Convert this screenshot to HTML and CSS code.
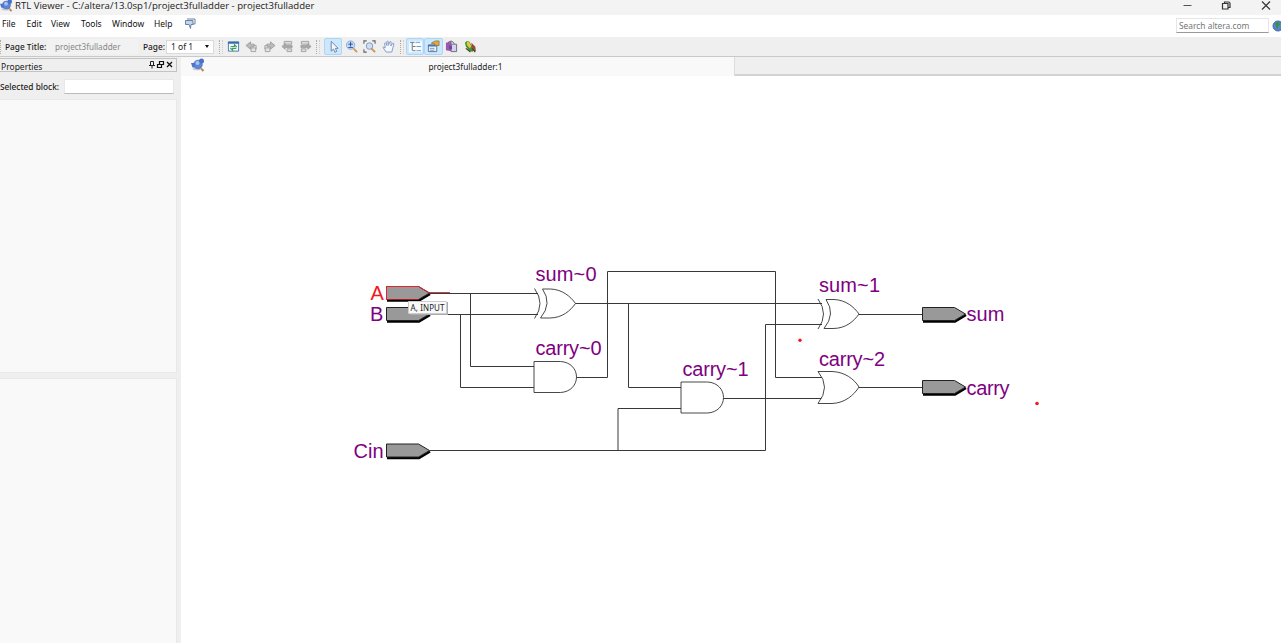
FILE: index.html
```html
<!DOCTYPE html>
<html lang="en">
<head>
<meta charset="utf-8">
<title>RTL Viewer</title>
<link rel="stylesheet" href="styles.css">
</head>
<body>
<svg class="defs" width="0" height="0">
  <symbol id="logo" viewBox="0 0 14 14">
    <path d="M9 9.500l3.500 3.500" stroke="#b9854a" stroke-width="2"/>
    <ellipse cx="6" cy="11" rx="4.500" ry="1.300" fill="#c9ccd4"/>
    <circle cx="7" cy="6.500" r="4.300" fill="#5f86d8" stroke="#4a6cba" stroke-width=".7"/>
    <circle cx="10.500" cy="3" r="2.500" fill="#4772c6"/>
    <path d="M0 5h4v4.500H1.500z" fill="#4f76c6"/>
    <circle cx="6.500" cy="5" r="2" fill="#a9c4f3"/>
  </symbol>
  <symbol id="pagearrow" viewBox="0 0 14 14">
    <path d="M1 6l5-4v2.500h4v3H6V10z" fill="#bababa" stroke="#959595" stroke-width=".8"/>
    <path d="M6.500 8.500h5v4h-5zM9 6h3v4" fill="#e4e4e4" stroke="#a2a2a2"/>
  </symbol>
  <symbol id="hier" viewBox="0 0 14 14">
    <path d="M3.500 1.500h8v3h-8zM6.500 9.500h5v3h-5z" fill="#ddd" stroke="#a0a0a0"/>
    <path d="M1 7l3.500-3v2H12v2H4.500v2z" fill="#aaa" stroke="#888" stroke-width=".6"/>
  </symbol>
</svg>
<div class="window">
  <header class="titlebar">
    <svg class="app-logo"><use href="#logo"/></svg>
    <span class="title">RTL Viewer - C:/altera/13.0sp1/project3fulladder - project3fulladder</span>
    <svg class="controls" viewBox="0 0 100 15">
      <path d="M3.500 5.500h8" stroke="#555"/>
      <path d="M42.500 3.500h5.500v5.500h-5.500zM44.500 3.500v-1.500h4q1.500 0 1.500 1.500v4h-2" fill="none" stroke="#333" stroke-width="1.200"/>
      <path d="M82 1.500l8 8m0-8l-8 8" stroke="#333" stroke-width="1.100"/>
    </svg>
  </header>
  <nav class="menubar">
    <span class="m-file">File</span><span class="m-edit">Edit</span><span class="m-view">View</span><span class="m-tools">Tools</span><span class="m-window">Window</span><span class="m-help">Help</span>
    <svg class="feedback" viewBox="0 0 12 12"><path d="M1.500 2.500h7.500v4h-2L6.500 10.500 5 6.500H1.500z" fill="#c4d6ea" stroke="#6782a5"/><path d="M3 1h8v5H9" fill="none" stroke="#6782a5"/></svg>
    <div class="search"><span>Search altera.com</span></div>
    <svg class="globe" viewBox="0 0 12 12"><circle cx="6" cy="6" r="5" fill="#5b84cf" stroke="#4368ab"/><path d="M3 3l4-1 1 3-2 1v4L4 7zM9 5l2 1-1 3z" fill="#36914b"/></svg>
  </nav>
  <div class="toolbar">
    <i class="grip g-first"></i>
    <span class="label page-title">Page Title:</span><span class="page-name">project3fulladder</span>
    <span class="label page-label">Page:</span><span class="page-select">1 of 1<i class="caret"></i></span>
    <i class="grip g-nav"></i>
    <div class="group nav-group">
      <svg viewBox="0 0 14 14"><path d="M1.500 2h11v10h-11z" fill="#f3f8fc" stroke="#4777ad"/><path d="M1 2h12v2H1z" fill="#326bb1"/><path d="M4 7h4V5l2.500 2.500M10 9H6v2L3.500 8.500" stroke="#43a05a" stroke-width="1.300" fill="none"/></svg>
      <svg viewBox="0 0 14 14"><use href="#pagearrow"/></svg>
      <svg viewBox="0 0 14 14"><use href="#pagearrow" transform="translate(14 0) scale(-1 1)"/></svg>
      <svg viewBox="0 0 14 14"><use href="#hier"/></svg>
      <svg viewBox="0 0 14 14"><use href="#hier" transform="translate(14 0) scale(-1 1)"/></svg>
    </div>
    <i class="grip g-tools"></i>
    <div class="group">
      <span class="tool on"><svg viewBox="0 0 14 14"><path d="M4.500 1.500v10.500L7 9.800l1.500 3.400 2-.9L9 9h3z" fill="#f4f7fc" stroke="#6a7f9e" stroke-width="1"/></svg></span>
      <span class="tool"><svg viewBox="0 0 14 14"><path d="M9 9l4 4" stroke="#d39b4c" stroke-width="2"/><circle cx="6" cy="5.500" r="4.500" fill="#c8dcfa" stroke="#8aa9d7"/><path d="M3.500 4.500h5M6 2v5M3.500 8h5" stroke="#244e99"/></svg></span>
      <span class="tool"><svg viewBox="0 0 14 14"><path d="M1 4V1h3M10 1h3v3M1 10v3h3" fill="none" stroke="#5f6368" stroke-width="1.200"/><path d="M9 9l4 4" stroke="#ce944a" stroke-width="2"/><circle cx="7" cy="6.500" r="3.500" fill="#cfdef3" stroke="#8097b8"/></svg></span>
      <span class="tool"><svg viewBox="0 0 14 14"><path d="M4.500 13L1 8q.8-1.200 2.500.5L2.700 3.500q1-1 1.600 0L5.200 6V1.700q1-1 1.600 0v4L8.500 1.800q1-.6 1.400.4L9.500 6.500l2-3q1.300-.4 1.300.8L10.500 13z" fill="#f4f8ff" stroke="#7f97cb" stroke-width="1"/></svg></span>
    </div>
    <i class="grip g-view"></i>
    <div class="group">
      <span class="tool on"><svg viewBox="0 0 14 14"><path d="M0 1h14v12H0z" fill="#f8fbfd"/><path d="M1 2.500h5M4 7h3M4 11.500h3M3.500 2.500v9" stroke="#5f7482"/><path d="M7 2.500h5M8 7h5M8 11.500h5" stroke="#6c92c4"/></svg></span>
      <span class="tool on"><svg viewBox="0 0 14 14"><path d="M1.500 5.500h9v7h-9z" fill="#f2f5fa" stroke="#55759d"/><path d="M1 5h9v2H1z" fill="#4374b6"/><path d="M3 9h5M3 11h5" stroke="#7795bc"/><path d="M5 3l4-2h4v5H9L8 4H5z" fill="#e0aa3a" stroke="#86652b" stroke-width=".7"/></svg></span>
      <span class="tool"><svg viewBox="0 0 14 14"><path d="M1 3l6-1v10l-6-1z" fill="#9a58b4"/><path d="M6.500 4.500h6v8h-6z" fill="#cfd4e8" stroke="#6e6490"/><path d="M3 3q4-4 7 1" fill="none" stroke="#555"/><path d="M4.500 6h3v4h-3z" fill="#784294"/></svg></span>
      <span class="tool"><svg viewBox="0 0 14 14"><path d="M1 3q2-3 5-1l2 4 5 6-3-.5-1 1.500-4-2-3-4z" fill="#3f9436"/><path d="M3 2q2-1 3 1l2 4-2 2-3-4z" fill="#e3c840"/><path d="M8 3l4 4 1 5-5-5z" fill="#a74036"/><path d="M2 9l5 4M9 9l3 4" stroke="#523a28" stroke-width="1.300"/></svg></span>
    </div>
  </div>
  <div class="workspace">
    <aside class="properties">
      <div class="dock-title"><span>Properties</span>
        <svg viewBox="0 0 26 9"><path d="M2.500 1.500h3v4h-3zM1 5.500h6M4 6v2.500" fill="none" stroke="#222"/><path d="M11.500 1.500h4v3h-4zM9.500 4.500h4v3h-4z" fill="#eee" stroke="#111" stroke-width="1.200"/><path d="M19 2l5 5m0-5l-5 5" stroke="#111" stroke-width="1.300"/></svg>
      </div>
      <div class="selected"><span class="label">Selected block:</span><span class="field"></span></div>
      <div class="pane pane-top"></div>
      <div class="pane pane-bottom"></div>
    </aside>
    <main class="document">
      <div class="tabs"><div class="tab"><svg><use href="#logo"/></svg><span>project3fulladder:1</span></div><div class="tab-rest"></div></div>
      <svg class="schematic" viewBox="181 76 1100 567">
        <defs>
          <g id="port"><path d="M1 14.500h32L44 8" fill="none" stroke="#000" stroke-width="2.500"/><path d="M.5.500h32L43.500 7 32.500 13.500H.5z" fill="#999" stroke="#222"/></g>
          <path id="and" d="M.5.500H27C37 1 43 8 43 16S37 31 27 31.500H.5z"/>
          <g id="xor"><path d="M0 0Q11 15 0 30" fill="none"/><path d="M8 .5H16C28 1 36 8 41 15C36 22 28 29.500 15 29.500H6Q18 15 8 .5z"/></g>
          <path id="or" d="M0 .5H14C27 1 36 8 41 16C36 24 27 32 14 32.500H0Q13 16 0 .5z"/>
        </defs>
        <g class="wires">
          <path d="M430 293.500h108M430 314.500h108M470.500 293v73.500H534M460.500 314v73.500H534"/>
          <path d="M575 303.500h247M628.500 303v84.500H681M577 377.500h30.500v-106h168v106H822"/>
          <path d="M430 450.500h335.500v-126H822M618 450v-41.500H681M723 398.500h99M859 314.500h63M859 387.500h63"/>
        </g>
        <path d="M429 292.700h21" stroke="#9d1f24"/>
        <g class="gates">
          <use href="#xor" x="534.500" y="288.500"/><use href="#and" x="533.500" y="361"/>
          <use href="#and" x="680.500" y="381.500"/><use href="#xor" x="818" y="299"/><use href="#or" x="818" y="371"/>
        </g>
        <use href="#port" x="386" y="286"/><path d="M386.500 300v-13.500h32l11 6.500" fill="none" stroke="#e3242b"/><path d="M387 299.500h31" stroke="#b3161d"/>
        <use href="#port" x="386" y="307"/><use href="#port" x="386" y="443.500"/>
        <use href="#port" x="922" y="307"/><use href="#port" x="922" y="380"/>
        <g class="names">
          <text class="active" x="370.500" y="299.500" textLength="13.500">A</text><text x="370" y="321" textLength="13">B</text>
          <text x="353.500" y="457.500" textLength="30">Cin</text>
          <text x="535.500" y="281" textLength="61">sum~0</text><text x="535.500" y="354.500" textLength="66">carry~0</text>
          <text x="682.500" y="376" textLength="66">carry~1</text><text x="819" y="292" textLength="61">sum~1</text>
          <text x="819" y="365.500" textLength="66">carry~2</text><text x="966.500" y="321" textLength="38">sum</text><text x="966.500" y="394.500" textLength="43">carry</text>
        </g>
        <circle cx="800" cy="340.300" r="1.700" fill="#ed1c24"/><circle cx="1037" cy="403.500" r="1.800" fill="#ed1c24"/>
        <path d="M410 302h38v13h-38z" fill="#aaa"/><path d="M408.500 301.500h38v12h-38z" fill="#f9f9f9" stroke="#ccc"/>
        <text class="tip" x="410.500" y="310.500" textLength="34">A, INPUT</text>
      </svg>
    </main>
  </div>
</div>
</body>
</html>
```
FILE: styles.css
```css
* { box-sizing: border-box; }
body { margin: 0; background: #fff; color: #222; font: 8.5px/12px "Noto Sans", sans-serif; overflow: hidden; }
.defs { display: block; height: 0; }
svg { display: block; flex: none; fill: none; }
.window { width: 1281px; height: 643px; display: flex; flex-direction: column; white-space: nowrap; }
.titlebar { height: 15px; flex: none; display: flex; background: #f3f3f3; overflow: hidden; }
.app-logo { width: 13px; height: 13px; margin-right: 2px; margin-top: -1px; }
.title { font: 9.6px/12px "Open Sans", sans-serif; }
.controls { width: 100px; height: 15px; margin-left: auto; }
.titlebar .controls { margin-right: 1px; }
.menubar { height: 22px; flex: none; display: flex; align-items: flex-start; padding: 3px 0 0 2px; background: #fff; color: #111; }
.menubar span { flex: none; }
.m-file { width: 24.5px; } .m-edit { width: 24.5px; } .m-view { width: 30px; }
.m-tools { width: 31px; } .m-window { width: 42px; } .m-help { width: 29.5px; }
.feedback { width: 12px; height: 12px; }
.search { width: 93px; height: 15px; margin-left: auto; padding: 2px; border: 1px solid #e6e6e6; border-bottom-color: #999; color: #777; font-size: 8.4px; line-height: 10px; }
.globe { width: 12px; height: 12px; margin: 2px -3px 0 3px; }
.toolbar { height: 20px; flex: none; display: flex; align-items: center; background: #efefef; border-bottom: 1px solid #c9c9c9; }
.grip { width: 4px; height: 14px; flex: none; border-left: 1px dotted #aaa; border-right: 1px dotted #ccc; }
.g-first { width: 1px; border-right: 0; margin-right: 4px; }
.label { flex: none; font-weight: 500; font-size: 8.3px; color: #1c1c1c; }
.page-title { width: 42px; }
.page-name { width: 91px; height: 15px; padding-left: 8px; line-height: 15px; font-size: 8.1px; background: #f2f2f2; color: #888; }
.page-label { width: 23px; margin-left: 5px; }
.page-select { width: 48px; height: 14px; padding: 0 4px; display: flex; align-items: center; justify-content: space-between; background: #fff; border: 1px solid #dadada; }
.caret { border: 2.5px solid transparent; border-top: 3px solid #111; border-bottom: 0; }
.g-nav { margin-left: 5px; }
.group { display: flex; align-items: center; height: 18px; }
.group svg { width: 13px; height: 13px; }
.nav-group { gap: 5.1px; margin-left: 4px; width: 86px; }
.g-tools { margin-left: 3px; }
.tool { width: 18.3px; height: 17px; display: flex; align-items: center; justify-content: center; }
.tool.on { background: #cce8ff; border: 1px solid #abd6f5; border-radius: 2px; }
.g-tools + .group { margin-left: 4px; }
.g-view { margin-left: 3px; }
.g-view + .group { margin-left: 2px; }
.workspace { flex: 1; min-height: 0; display: flex; }
.properties { width: 181px; flex: none; display: flex; flex-direction: column; background: #efefef; }
.dock-title { width: 177px; height: 14px; margin-top: 1px; flex: none; display: flex; align-items: center; justify-content: space-between; padding: 2px 2px 0 0; border: 1px solid #c3c3c3; border-left: 0; }
.dock-title svg { width: 26px; height: 9px; margin-top: -4px; }
.dock-title span { padding: 2px 0 0 1px; }
.selected { height: 27px; flex: none; display: flex; align-items: center; }
.selected .label { width: 64px; padding-top: 2px; }
.field { width: 110px; height: 15px; margin-top: 1px; background: #fff; border: 1px solid #e8e8e8; border-bottom-color: #bbb; }
.pane { width: 177px; background: #f9f9f9; border: 1px solid #e9e9e9; border-left: 0; }
.pane-top { height: 274px; flex: none; }
.pane-bottom { flex: 1; margin-top: 5px; border-bottom: 0; }
.document { flex: 1; display: flex; flex-direction: column; }
.tabs { height: 19px; flex: none; display: flex; }
.tab { width: 554px; display: flex; align-items: center; justify-content: center; position: relative; padding-left: 16px; font-size: 8.3px; background: #f9f9f9; border-right: 1px solid #ddd; }
.tab svg { width: 14px; height: 14px; position: absolute; left: 10px; top: 1px; }
.tab-rest { flex: 1; background: #efefef; border-bottom: 2px solid #d2d2d2; }
.schematic { width: 1100px; height: 567px; }
.wires { stroke: #383838; stroke-width: 1; }
.gates { fill: #fff; stroke: #333; stroke-width: .9; }
.names { font: 20px "Liberation Sans", Arial, sans-serif; fill: #800080; }
.names .active { fill: #f01820; }
.tip { font: 8px "Noto Sans", sans-serif; fill: #222; }
```
